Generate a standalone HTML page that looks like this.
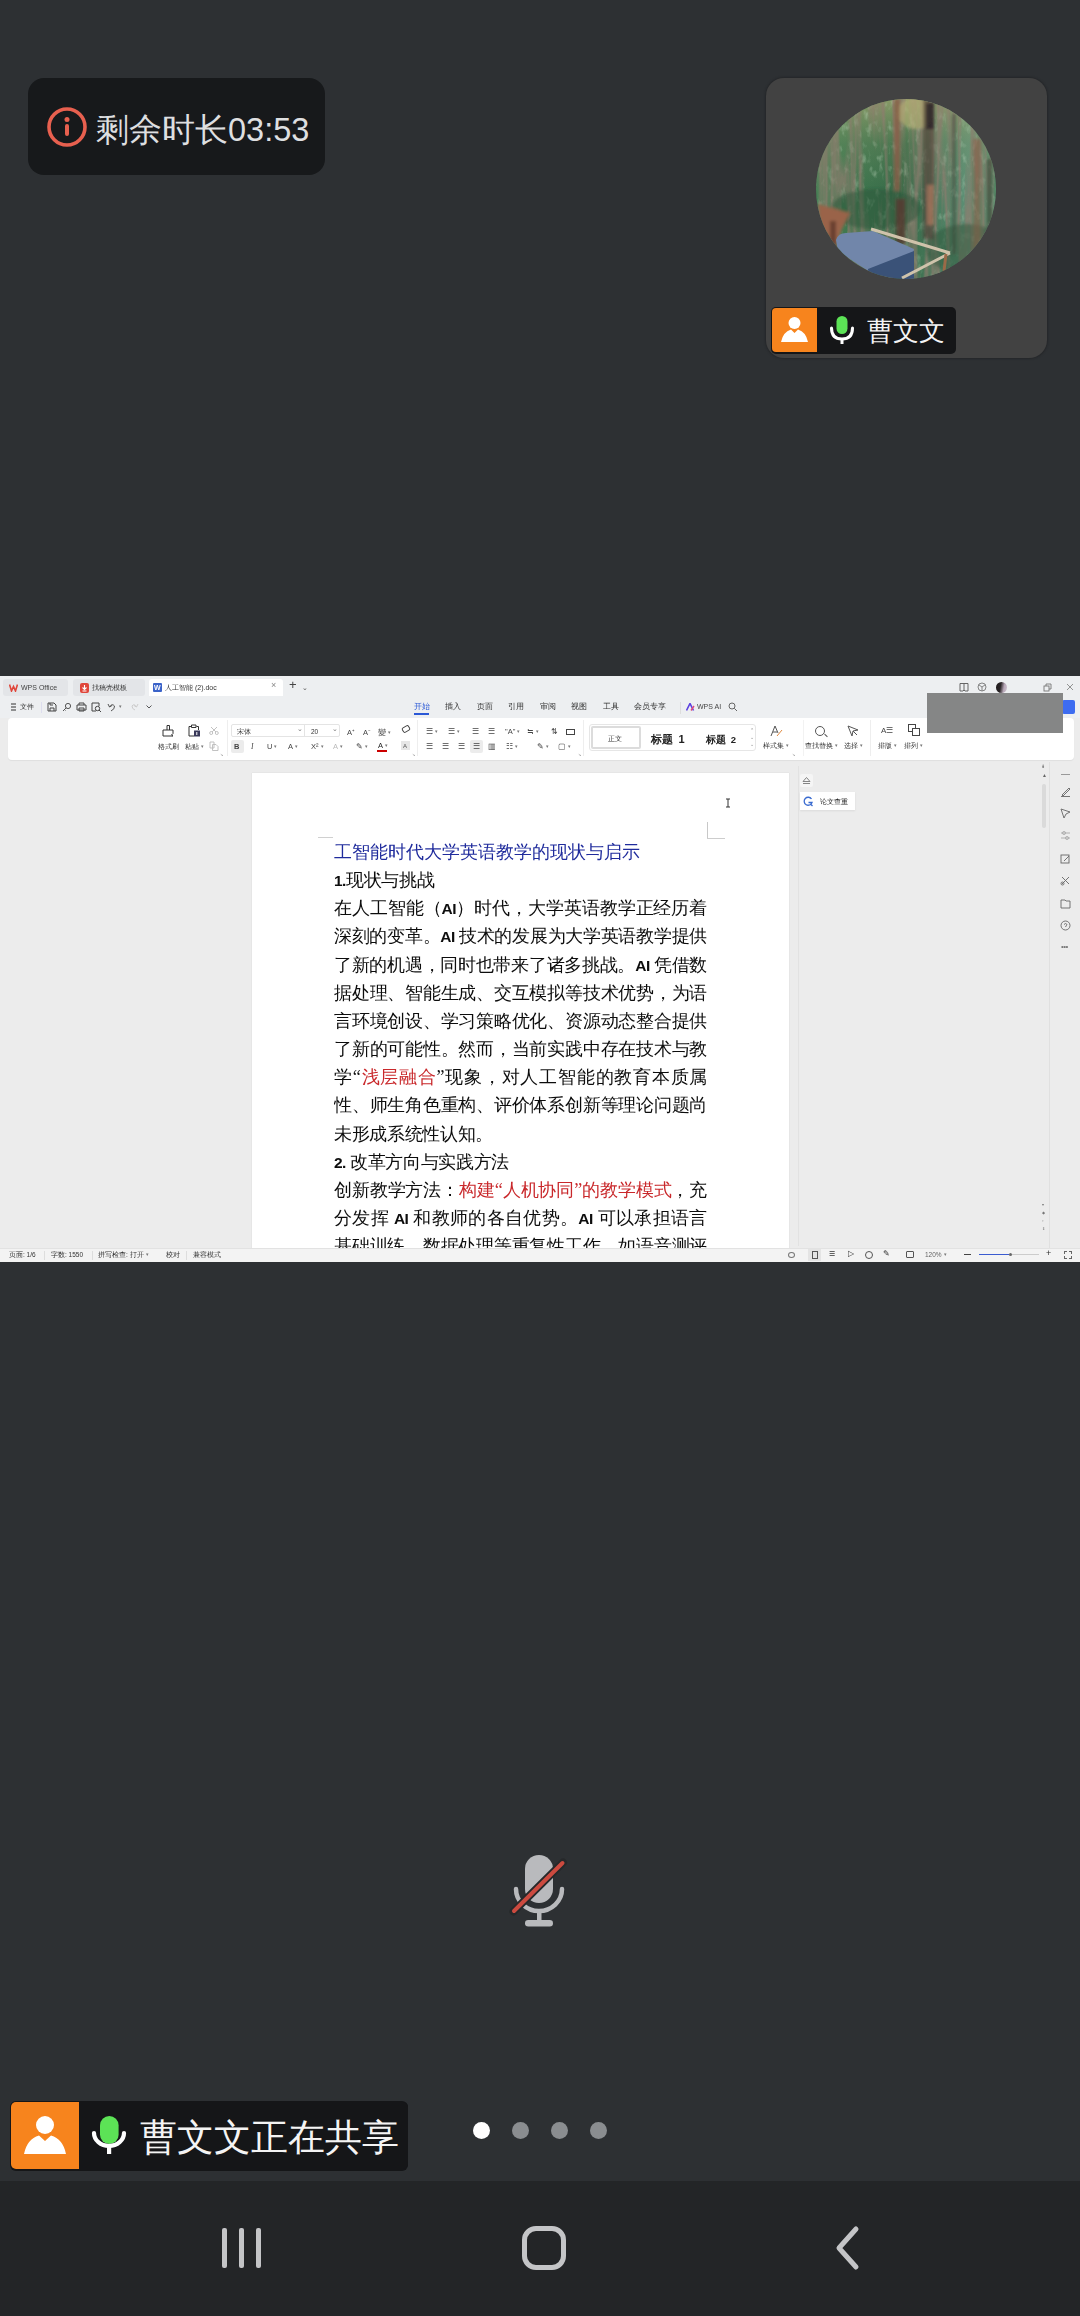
<!DOCTYPE html>
<html><head><meta charset="utf-8">
<style>
*{margin:0;padding:0;box-sizing:border-box}
html,body{width:1080px;height:2316px;overflow:hidden;background:#2d3033;font-family:"Liberation Sans",sans-serif;position:relative}
.abs{position:absolute}
#timer{left:28px;top:78px;width:297px;height:97px;border-radius:16px;background:#17191b}
#timer .txt{left:68px;top:32px;font-size:32.5px;color:#dedfe0;white-space:nowrap;line-height:40px}
#tile{left:766px;top:78px;width:281px;height:280px;border-radius:18px;background:#424242;box-shadow:0 0 2px 1px rgba(20,20,22,0.35)}
#avatar{left:50px;top:21px;width:180px;height:180px;border-radius:50%;overflow:hidden;background:#3f6a45}
.lbl{background:#151618;border-radius:4px}
#screen{left:0;top:676px;width:1080px;height:586px;background:#ececec;overflow:hidden;filter:blur(0.3px)}
#nav{left:0;top:2181px;width:1080px;height:135px;background:#232527}
.st{white-space:nowrap;line-height:1}
.menu{top:27px;font-size:7.5px;color:#333}
.dl{left:334px;width:373px;font-size:18px;letter-spacing:-0.35px;line-height:20px;height:20px;color:#0d0d0d;white-space:nowrap;font-family:"Liberation Serif",serif}
.dl.j{text-align:justify;text-align-last:justify;white-space:normal;overflow:hidden}
.dl .en{font-family:"Liberation Sans",sans-serif;font-weight:bold;font-size:15.5px;letter-spacing:-0.5px}
.red{color:#c9282b}
.rb{font-size:6.5px;color:#333}
.ic{font-size:7.5px;color:#444}
.sb{top:575.5px;font-size:6.5px;color:#333}
.ar{font-size:5px;color:#777;margin-left:2px;vertical-align:1px}
.dot{width:17.5px;height:17.5px;border-radius:50%;background:#8a8d90;top:2121.5px}
</style></head>
<body>
<!-- timer -->
<div id="timer" class="abs">
  <svg class="abs" style="left:19px;top:29px" width="40" height="40" viewBox="0 0 40 40">
    <circle cx="20" cy="20" r="18" fill="none" stroke="#e8604f" stroke-width="3.6"/>
    <circle cx="20" cy="12.5" r="2.5" fill="#e8604f"/>
    <rect x="18" y="17" width="4" height="12" rx="2" fill="#e8604f"/>
  </svg>
  <div class="abs txt">剩余时长03:53</div>
</div>

<!-- participant tile -->
<div id="tile" class="abs">
  <svg class="abs" style="left:50px;top:21px" width="180" height="180" viewBox="0 0 180 180">
    <defs>
      <clipPath id="cc"><circle cx="90" cy="90" r="90"/></clipPath>
      <linearGradient id="fg" x1="0" y1="0" x2="1" y2="0">
        <stop offset="0" stop-color="#458054"/><stop offset="0.5" stop-color="#376a48"/><stop offset="0.85" stop-color="#5e9076"/><stop offset="1" stop-color="#548a66"/>
      </linearGradient>
      <linearGradient id="tg" x1="0" y1="0" x2="0" y2="1">
        <stop offset="0" stop-color="#a4a870" stop-opacity="0.75"/><stop offset="0.25" stop-color="#8a9a6a" stop-opacity="0.25"/><stop offset="0.5" stop-color="#8a9a6a" stop-opacity="0"/>
      </linearGradient>
      <filter id="bl" x="-20%" y="-20%" width="140%" height="140%"><feGaussianBlur stdDeviation="1.5"/></filter>
      <filter id="vs" x="0" y="0" width="100%" height="100%">
        <feTurbulence type="turbulence" baseFrequency="0.09 0.006" numOctaves="2" seed="3"/>
        <feColorMatrix values="0 0 0 0 0.28  0 0 0 0 0.2  0 0 0 0 0.16  0 0 0 -3 1.1"/>
      </filter>
      <filter id="tx" x="0" y="0" width="100%" height="100%">
        <feTurbulence type="fractalNoise" baseFrequency="0.16 0.09" numOctaves="3" seed="11"/>
        <feColorMatrix values="0 0 0 0 0.55  0 0 0 0 0.72  0 0 0 0 0.55  0 0 0 3.2 -1.7"/>
      </filter>
    </defs>
    <g clip-path="url(#cc)">
      <rect width="180" height="180" fill="url(#fg)"/>
      <rect width="180" height="180" fill="url(#tg)"/>
      <rect width="180" height="180" filter="url(#tx)" opacity="0.35"/>
      <rect width="180" height="180" filter="url(#vs)" opacity="0.7"/>
      <g filter="url(#bl)">
        <ellipse cx="100" cy="14" rx="18" ry="16" fill="#c0b878" opacity="0.55"/>
        <ellipse cx="60" cy="110" rx="45" ry="20" fill="#2a5438" opacity="0.5"/>
        <ellipse cx="150" cy="150" rx="40" ry="25" fill="#2a5238" opacity="0.5"/>
        <rect x="78" y="0" width="6" height="92" fill="#8a5c44" opacity="0.75"/>
        <rect x="80" y="100" width="9" height="45" fill="#5a3a30" opacity="0.8"/>
        <rect x="107" y="0" width="11" height="140" fill="#4a3a32" opacity="0.6"/>
        <rect x="110" y="4" width="8" height="26" fill="#2a2024" opacity="0.8"/>
        <rect x="111" y="86" width="7" height="40" fill="#c08062" opacity="0.6"/>
        <rect x="136" y="15" width="4" height="140" fill="#3e4a3a" opacity="0.55"/>
        <rect x="157" y="40" width="8" height="120" fill="#8a5a44" opacity="0.6"/>
        <rect x="171" y="60" width="5" height="90" fill="#3a3a30" opacity="0.6"/>
        <path d="M2 105 L34 114 L26 130 L20 146 L4 130 Z" fill="#9a6448"/>
        <rect x="14" y="122" width="6" height="30" fill="#6a4030"/>
      </g>
      <path d="M20 141 Q22 134 30 134 L57 132 L98 150 L96 162 L52 172 L22 152 Z" fill="#7186aa"/>
      <path d="M52 170 L98 152 L98 180 L52 180 Z" fill="#3a5278"/>
      <path d="M55 130 L134 154 M134 154 L86 179" stroke="#cfc3ab" stroke-width="3" fill="none"/>
      <path d="M130 155 L128 172" stroke="#9a6a48" stroke-width="3"/>
    </g>
  </svg>
  <div class="abs" style="left:4.5px;top:228.5px;width:185px;height:47px;background:#151618;border-radius:5px"></div>
  <div class="abs" style="left:6px;top:230px;width:45px;height:44px;background:#f7841d;border-radius:4px 0 0 4px"></div>
  <div class="abs lbl" style="left:51px;top:230px;width:137px;height:44px;border-radius:0 4px 4px 0"></div>
  <svg class="abs" style="left:6px;top:230px" width="45" height="44" viewBox="0 0 45 44">
    <circle cx="22.5" cy="15" r="6" fill="#fff"/>
    <path d="M9 34 Q11 24 19 21.5 L22.5 25 L26 21.5 Q34 24 36 34 Z" fill="#fff"/>
  </svg>
  <svg class="abs" style="left:62px;top:236px" width="28" height="32" viewBox="0 0 28 32">
    <rect x="8.5" y="2" width="11" height="18" rx="5.5" fill="#5ce356"/>
    <path d="M3.5 14 Q3.5 25 14 25 Q24.5 25 24.5 14" fill="none" stroke="#fff" stroke-width="3" stroke-linecap="round"/>
    <rect x="12.5" y="25" width="3" height="5" fill="#fff"/>
  </svg>
  <div class="abs st" style="left:101px;top:238px;font-size:26px;color:#f4f4f4;line-height:30px">曹文文</div>
</div>

<!-- shared screen -->
<div id="screen" class="abs">
  <!-- tab bar -->
  <div class="abs" style="left:0;top:0;width:1080px;height:42px;background:#edeff1"></div>
  <div class="abs" style="left:3px;top:3px;width:65px;height:17px;background:#e3e5e8;border-radius:3px"></div>
  <div class="abs" style="left:73px;top:3px;width:72px;height:17px;background:#e3e5e8;border-radius:3px"></div>
  <div class="abs" style="left:149px;top:3px;width:134px;height:17px;background:#ffffff;border-radius:3px 3px 0 0"></div>
  <svg class="abs" style="left:9px;top:8px" width="9" height="8" viewBox="0 0 9 8"><path d="M0.5 0.5 L2.5 7 L4.5 2.5 L6.5 7 L8.5 0.5" fill="none" stroke="#e0463a" stroke-width="1.6"/></svg>
  <div class="abs st" style="left:21px;top:7.5px;font-size:7px;color:#444">WPS Office</div>
  <div class="abs" style="left:80px;top:7px;width:9px;height:10px;background:#e0463a;border-radius:2px"></div><svg class="abs" style="left:81px;top:8px" width="7" height="8" viewBox="0 0 7 8" fill="none" stroke="#fff" stroke-width="1.1"><path d="M3.5 1 V5 M1.5 3.5 L3.5 5.5 L5.5 3.5 M1.5 7 H5.5"/></svg>
  <div class="abs st" style="left:92px;top:7.5px;font-size:7px;color:#333">找稿壳模板</div>
  <div class="abs" style="left:153px;top:7px;width:9px;height:9px;background:#3b63c9;border-radius:1px"></div>
  <div class="abs st" style="left:154px;top:7.5px;font-size:7px;color:#fff;font-weight:bold">W</div>
  <div class="abs st" style="left:165px;top:7.5px;font-size:7px;color:#333">人工智能 (2).doc</div>
  <div class="abs st" style="left:271px;top:5px;font-size:9px;color:#888">×</div>
  <div class="abs st" style="left:289px;top:2px;font-size:13px;color:#444">+</div>
  <div class="abs st" style="left:302px;top:7.5px;font-size:7px;color:#555">⌄</div>
  <!-- window icons -->
  <svg class="abs" style="left:959px;top:6px" width="10" height="10" viewBox="0 0 10 10" fill="none" stroke="#666" stroke-width="1"><path d="M1 1.5 H9 V9 H6 L5 8 L4 9 H1 Z M5 1.5 V8"/></svg>
  <svg class="abs" style="left:977px;top:6px" width="10" height="10" viewBox="0 0 10 10" fill="none" stroke="#777" stroke-width="0.9"><circle cx="5" cy="5" r="4"/><path d="M5 5 V9 M5 5 L1.8 2.8 M5 5 L8.2 2.8"/></svg>
  <div class="abs" style="left:996px;top:6px;width:11px;height:11px;background:linear-gradient(100deg,#1e1a1c 0%,#2a2426 40%,#b8a8b8 70%,#d0c4d0 100%);border-radius:50%"></div>
  <svg class="abs" style="left:1043px;top:7px" width="9" height="9" viewBox="0 0 9 9" fill="none" stroke="#777" stroke-width="0.9"><rect x="1" y="3" width="5" height="5"/><path d="M3 3 V1 H8 V6 H6"/></svg>
  <svg class="abs" style="left:1066px;top:7px" width="8" height="8" viewBox="0 0 8 8" fill="none" stroke="#888" stroke-width="0.9"><path d="M1 1 L7 7 M7 1 L1 7"/></svg>
  <!-- menu row -->
  <svg class="abs" style="left:10px;top:27px" width="7" height="8" viewBox="0 0 7 8" fill="none" stroke="#333" stroke-width="1"><path d="M1 1 H6 M1 4 H6 M1 7 H6"/></svg>
  <div class="abs st" style="left:20px;top:27px;font-size:7px;color:#333">文件</div>
  <div class="abs" style="left:41px;top:26px;width:1px;height:11px;background:#dde"></div>
  <svg class="abs" style="left:47px;top:26px" width="10" height="10" viewBox="0 0 10 10" fill="none" stroke="#444" stroke-width="1"><path d="M1 1 H7 L9 3 V9 H1 Z M3 9 V6 H7 V9 M3 1 V3 H6"/></svg>
  <svg class="abs" style="left:62px;top:26px" width="10" height="10" viewBox="0 0 10 10" fill="none" stroke="#555" stroke-width="1"><circle cx="6" cy="4" r="2.6"/><path d="M4.2 5.8 L1 9 M2.5 7.5 L3.5 8.5"/></svg>
  <svg class="abs" style="left:76px;top:26px" width="11" height="10" viewBox="0 0 11 10" fill="none" stroke="#444" stroke-width="1"><path d="M3 3 V1 H8 V3 M1 3 H10 V8 H1 Z M3 6 H8 V9 H3 Z"/></svg>
  <svg class="abs" style="left:91px;top:26px" width="11" height="11" viewBox="0 0 11 11" fill="none" stroke="#444" stroke-width="1"><path d="M5 9 H1 V1 H8 V4"/><circle cx="6.5" cy="6.5" r="2.2"/><path d="M8 8 L10 10"/></svg>
  <svg class="abs" style="left:107px;top:26px" width="9" height="10" viewBox="0 0 9 10" fill="none" stroke="#555" stroke-width="1"><path d="M1 2 L2.5 5 L5 3.5 M2.5 5 Q5 1 7.5 4 Q8 7 4 9"/></svg>
  <div class="abs st" style="left:119px;top:28px;font-size:5px;color:#777">▾</div>
  <svg class="abs" style="left:131px;top:26px" width="8" height="9" viewBox="0 0 8 9" fill="none" stroke="#ccc" stroke-width="1"><path d="M7 2 L5.5 5 L3 3.5 M5.5 5 Q3 1 1 4 Q1 7 4 8"/></svg>
  <svg class="abs" style="left:146px;top:29px" width="6" height="4" viewBox="0 0 6 4" fill="none" stroke="#555" stroke-width="1"><path d="M0.5 0.5 L3 3 L5.5 0.5"/></svg>
  <div class="abs st menu" style="left:414px;color:#2a58d6">开始</div>
  <div class="abs" style="left:414px;top:37px;width:15px;height:1.5px;background:#2a58d6"></div>
  <div class="abs st menu" style="left:445px">插入</div>
  <div class="abs st menu" style="left:477px">页面</div>
  <div class="abs st menu" style="left:508px">引用</div>
  <div class="abs st menu" style="left:540px">审阅</div>
  <div class="abs st menu" style="left:571px">视图</div>
  <div class="abs st menu" style="left:603px">工具</div>
  <div class="abs st menu" style="left:634px">会员专享</div>
  <div class="abs" style="left:680px;top:26px;width:1px;height:12px;background:#ddd"></div>
  <svg class="abs" style="left:686px;top:27px" width="10" height="8" viewBox="0 0 10 8"><path d="M0.5 7.5 L4 0.5 L7.5 7.5" fill="none" stroke="#5a3fe0" stroke-width="1.6"/><path d="M5 7.5 L8 3" stroke="#e04a7a" stroke-width="1.4"/></svg>
  <div class="abs st" style="left:697px;top:27px;font-size:7px;color:#444">WPS AI</div>
  <svg class="abs" style="left:728px;top:26px" width="10" height="10" viewBox="0 0 10 10" fill="none" stroke="#666" stroke-width="1"><circle cx="4" cy="4" r="3"/><path d="M6.3 6.3 L9 9"/></svg>
  <div class="abs" style="left:1062px;top:24px;width:13px;height:14px;background:#3d6cf0;border-radius:2px"></div>
  <!-- ribbon card -->
  <div class="abs" style="left:8px;top:42px;width:1066px;height:42px;background:#fff;border-radius:4px;box-shadow:0 1px 1px rgba(0,0,0,0.06)"></div>
<!-- ribbon contents -->
  <svg class="abs" style="left:161px;top:48px" width="14" height="13" viewBox="0 0 14 13" fill="none" stroke="#333" stroke-width="1"><path d="M6 6 V1.5 H8.5 V6 M2 12 V6 H12 V9.5 L10.5 11 L12 12 Z"/></svg>
  <div class="abs st rb" style="left:158px;top:68px">格式刷</div>
  <svg class="abs" style="left:187px;top:48px" width="14" height="13" viewBox="0 0 14 13" fill="none" stroke="#333" stroke-width="1"><path d="M4 2.5 H2 V12 H7 M9.5 2.5 H11.5 V6 M4.5 1 H9 V3.5 H4.5 Z"/><rect x="7" y="6.5" width="6" height="6" fill="#3a3a5a" stroke="none"/><path d="M9.8 8 V11" stroke="#fff"/></svg>
  <div class="abs st rb" style="left:185px;top:68px">粘贴<span class="ar">▾</span></div>
  <svg class="abs" style="left:209px;top:50px" width="10" height="9" viewBox="0 0 10 9" fill="none" stroke="#bbb" stroke-width="0.9"><path d="M2 1 L7 6 M8 1 L3 6"/><circle cx="2.2" cy="7" r="1.5"/><circle cx="7.8" cy="7" r="1.5"/></svg>
  <svg class="abs" style="left:209px;top:65px" width="10" height="10" viewBox="0 0 10 10" fill="none" stroke="#bbb" stroke-width="0.9"><path d="M1 1 H5 V7 H1 Z M3.5 3.5 H7 L9 5.5 V9.5 H3.5 Z"/></svg>
  <div class="abs" style="left:227px;top:44px;width:1px;height:36px;background:#eee"></div>
  <div class="abs" style="left:231px;top:48px;width:109px;height:13px;border:1px solid #e4e4e4;border-radius:2px"></div>
  <div class="abs" style="left:304px;top:48px;width:1px;height:13px;background:#e4e4e4"></div>
  <div class="abs st rb" style="left:237px;top:52.5px">宋体</div>
  <div class="abs st rb" style="left:297px;top:50px;color:#777">⌄</div>
  <div class="abs st rb" style="left:311px;top:52.5px">20</div>
  <div class="abs st rb" style="left:332px;top:50px;color:#777">⌄</div>
  <div class="abs" style="left:231px;top:64px;width:13px;height:13px;background:#ececec;border-radius:2px"></div>
  <div class="abs st ic" style="left:234px;top:67px;font-weight:bold">B</div>
  <div class="abs st ic" style="left:251px;top:67px;font-style:italic;font-family:'Liberation Serif',serif">I</div>
  <div class="abs st ic" style="left:267px;top:67px">U<span class="ar">▾</span></div>
  <div class="abs st ic" style="left:288px;top:67px">A<span class="ar">▾</span></div>
  <div class="abs st ic" style="left:311px;top:67px">X²<span class="ar">▾</span></div>
  <div class="abs st ic" style="left:333px;top:67px;color:#bbb">A<span class="ar">▾</span></div>
  <div class="abs st ic" style="left:356px;top:67px">&#9998;<span class="ar">▾</span></div>
  <div class="abs st ic" style="left:378px;top:66px;color:#222">A<span class="ar">▾</span></div>
  <div class="abs" style="left:377px;top:74px;width:10px;height:2px;background:#c00"></div>
  <div class="abs" style="left:401px;top:65px;width:9px;height:9px;background:#e6e6e6"></div>
  <div class="abs st" style="left:403px;top:67px;font-size:6px;color:#555">A</div>
  <div class="abs st ic" style="left:347px;top:52.5px">A⁺</div>
  <div class="abs st ic" style="left:363px;top:52.5px">A⁻</div>
  <div class="abs st ic" style="left:378px;top:52.5px">變<span class="ar">▾</span></div>
  <div class="abs" style="left:402px;top:50px;width:8px;height:6px;border:1px solid #444;border-radius:2px;transform:rotate(-30deg)"></div>
  <div class="abs" style="left:417px;top:44px;width:1px;height:36px;background:#eee"></div>
  <div class="abs st ic" style="left:426px;top:51.5px">☰<span class="ar">▾</span></div>
  <div class="abs st ic" style="left:448px;top:51.5px">☰<span class="ar">▾</span></div>
  <div class="abs st ic" style="left:472px;top:51.5px">☰</div>
  <div class="abs st ic" style="left:488px;top:51.5px">☰</div>
  <div class="abs st ic" style="left:505px;top:51.5px">"A"<span class="ar">▾</span></div>
  <div class="abs st ic" style="left:527px;top:51.5px">≒<span class="ar">▾</span></div>
  <div class="abs st ic" style="left:551px;top:51.5px">⇅</div>
  <div class="abs" style="left:566px;top:53px;width:9px;height:6px;border:1px solid #444"></div>
  <div class="abs st ic" style="left:426px;top:67px">☰</div>
  <div class="abs st ic" style="left:442px;top:67px">☰</div>
  <div class="abs st ic" style="left:458px;top:67px">☰</div>
  <div class="abs" style="left:470px;top:64px;width:13px;height:13px;background:#ececec;border-radius:2px"></div>
  <div class="abs st ic" style="left:473px;top:67px">☰</div>
  <div class="abs st ic" style="left:488px;top:67px">▥</div>
  <div class="abs st ic" style="left:506px;top:67px">☷<span class="ar">▾</span></div>
  <div class="abs st ic" style="left:537px;top:67px">&#9998;<span class="ar">▾</span></div>
  <div class="abs st ic" style="left:558px;top:67px">▢<span class="ar">▾</span></div>
  <div class="abs" style="left:583px;top:44px;width:1px;height:36px;background:#eee"></div>
  <div class="abs" style="left:589px;top:48px;width:167px;height:27px;border:1px solid #e6e6e6;border-radius:3px"></div>
  <div class="abs" style="left:591px;top:50px;width:50px;height:23px;border:2px solid #dcdcdc;border-radius:2px"></div>
  <div class="abs st" style="left:608px;top:59px;font-size:7px;color:#333">正文</div>
  <div class="abs st" style="left:651px;top:57.5px;font-size:11px;color:#222;font-weight:bold;font-family:'Liberation Serif',serif">标题&nbsp;&nbsp;<span style="font-family:'Liberation Sans',sans-serif">1</span></div>
  <div class="abs st" style="left:706px;top:58.5px;font-size:9.5px;color:#222;font-weight:bold;font-family:'Liberation Serif',serif">标题&nbsp;&nbsp;<span style="font-family:'Liberation Sans',sans-serif">2</span></div>
  <div class="abs st" style="left:750px;top:51px;font-size:5px;color:#888;line-height:7px">⌃<br>⌄<br>⌄</div>
  <svg class="abs" style="left:769px;top:48px" width="14" height="14" viewBox="0 0 14 14" fill="none" stroke="#555" stroke-width="1"><path d="M2 12 L6 2 L9 9 M4 8 H8"/><path d="M8 12 L13 6" stroke="#e08a40"/></svg>
  <div class="abs st rb" style="left:763px;top:67px">样式集<span class="ar">▾</span></div>
  <div class="abs" style="left:803px;top:44px;width:1px;height:36px;background:#f2f2f2"></div>
  <div class="abs" style="left:815px;top:50px;width:10px;height:10px;border:1px solid #555;border-radius:50%"></div>
  <div class="abs" style="left:824px;top:59px;width:4px;height:1px;background:#555;transform:rotate(45deg)"></div>
  <div class="abs st rb" style="left:805px;top:67px">查找替换<span class="ar">▾</span></div>
  <svg class="abs" style="left:847px;top:49px" width="12" height="12" viewBox="0 0 12 12" fill="none" stroke="#555" stroke-width="1"><path d="M1 1 L11 5 L6 6 L5 11 Z M6 6 L10 10"/></svg>
  <div class="abs st rb" style="left:844px;top:67px">选择<span class="ar">▾</span></div>
  <div class="abs" style="left:870px;top:44px;width:1px;height:36px;background:#eee"></div>
  <div class="abs st" style="left:881px;top:51px;font-size:8px;color:#444">A☰</div>
  <div class="abs st rb" style="left:878px;top:67px">排版<span class="ar">▾</span></div>
  <div class="abs" style="left:908px;top:48px;width:8px;height:8px;border:1px solid #444"></div>
  <div class="abs" style="left:912px;top:52px;width:8px;height:8px;border:1px solid #444;background:#fff"></div>
  <div class="abs st rb" style="left:904px;top:67px">排列<span class="ar">▾</span></div>
  <div class="abs st" style="left:220px;top:77px;font-size:4px;color:#999">↘</div>
  <div class="abs st" style="left:412px;top:77px;font-size:4px;color:#999">↘</div>
  <div class="abs st" style="left:578px;top:77px;font-size:4px;color:#999">↘</div>
  <div class="abs st" style="left:792px;top:77px;font-size:4px;color:#999">↘</div>
  <!-- gray overlay box -->
  <div class="abs" style="left:927px;top:17px;width:136px;height:40px;background:#858686"></div>
  <!-- document area -->
  <div class="abs" style="left:252px;top:97px;width:537px;height:480px;background:#fff;box-shadow:0 0 1px rgba(0,0,0,0.15)"></div>
<div class="abs" style="left:0;top:0;width:1080px;height:572px;overflow:hidden">
<div class="abs dl" style="top:166.0px"><span style="color:#1f2b9c;letter-spacing:0">工智能时代大学英语教学的现状与启示</span></div>
<div class="abs dl" style="top:194.2px"><b class="en">1.</b>现状与挑战</div>
<div class="abs dl j" style="top:222.3px">在人工智能（<b class="en">AI</b>）时代，大学英语教学正经历着</div>
<div class="abs dl j" style="top:250.4px">深刻的变革。<b class="en">AI</b> 技术的发展为大学英语教学提供</div>
<div class="abs dl j" style="top:278.6px">了新的机遇，同时也带来了诸多挑战。<b class="en">AI</b> 凭借数</div>
<div class="abs dl j" style="top:306.8px">据处理、智能生成、交互模拟等技术优势，为语</div>
<div class="abs dl j" style="top:334.9px">言环境创设、学习策略优化、资源动态整合提供</div>
<div class="abs dl j" style="top:363.0px">了新的可能性。然而，当前实践中存在技术与教</div>
<div class="abs dl j" style="top:391.2px">学“<span class="red">浅层融合</span>”现象，对人工智能的教育本质属</div>
<div class="abs dl j" style="top:419.4px">性、师生角色重构、评价体系创新等理论问题尚</div>
<div class="abs dl" style="top:447.5px">未形成系统性认知。</div>
<div class="abs dl" style="top:475.6px"><b class="en">2.</b> 改革方向与实践方法</div>
<div class="abs dl j" style="top:503.8px">创新教学方法：<span class="red">构建“人机协同”的教学模式</span>，充</div>
<div class="abs dl j" style="top:532.0px">分发挥 <b class="en">AI</b> 和教师的各自优势。<b class="en">AI</b> 可以承担语言</div>
<div class="abs dl j" style="top:560.1px">基础训练、数据处理等重复性工作，如语音测评</div>
</div>
<div class="abs" style="left:318px;top:161px;width:15px;height:1px;background:#d0d0d0"></div>
<div class="abs" style="left:707px;top:146px;width:1px;height:16px;background:#c8c8c8"></div>
<div class="abs" style="left:707px;top:162px;width:18px;height:1px;background:#cdcdcd"></div>
<svg class="abs" style="left:725px;top:122px" width="6" height="10" viewBox="0 0 6 10" fill="none" stroke="#333" stroke-width="1"><path d="M1 1 H5 M3 1 V9 M1 9 H5"/></svg>
  <!-- right panel -->
  <div class="abs" style="left:798px;top:90px;width:1px;height:480px;background:#e2e2e2"></div>
  <div class="abs" style="left:800px;top:98px;width:13px;height:13px;background:#f5f5f5;border-radius:2px"></div>
  <svg class="abs" style="left:802px;top:100px" width="9" height="9" viewBox="0 0 9 9" fill="none" stroke="#777" stroke-width="0.9"><path d="M1 5.5 L4.5 1.5 L8 5.5 Z M1 7.5 H8"/></svg>
  <div class="abs" style="left:800px;top:116px;width:55px;height:18px;background:#fff;box-shadow:0 1px 2px rgba(0,0,0,0.08)"></div>
  <svg class="abs" style="left:803px;top:120px" width="11" height="11" viewBox="0 0 11 11" fill="none" stroke="#3a6bd0" stroke-width="1.3"><path d="M8.5 3 A4 4 0 1 0 9 6.5 H5.5 M7.5 8 L9.5 10"/></svg>
  <div class="abs st" style="left:820px;top:121.5px;font-size:7px;color:#222">论文查重</div>
  <!-- scrollbar -->
  <div class="abs" style="left:1049px;top:86px;width:1px;height:492px;background:#e0e0e0"></div>
  <div class="abs" style="left:1042px;top:108px;width:4px;height:44px;background:#dadada;border-radius:2px"></div>
  <div class="abs st" style="left:1041px;top:88px;font-size:5px;color:#666">⇟</div>
  <div class="abs st" style="left:1042px;top:97px;font-size:5px;color:#666">▲</div>
<!-- right tool sidebar -->
  <div class="abs" style="left:1061px;top:98px;width:9px;height:1px;background:#999"></div>
  <svg class="abs" style="left:1060px;top:110px" width="11" height="11" viewBox="0 0 11 11" fill="none" stroke="#666" stroke-width="0.9"><path d="M2 9 L9 2 L10 3 L3 10 Z M1 10.5 H10"/></svg>
  <svg class="abs" style="left:1060px;top:132px" width="11" height="11" viewBox="0 0 11 11" fill="none" stroke="#666" stroke-width="0.9"><path d="M1 1 L10 4 L6 6 L4 10 Z"/></svg>
  <svg class="abs" style="left:1060px;top:154px" width="11" height="11" viewBox="0 0 11 11" fill="none" stroke="#aaa" stroke-width="0.9"><path d="M1 3 H10 M1 8 H10"/><circle cx="4" cy="3" r="1.5"/><circle cx="7" cy="8" r="1.5"/></svg>
  <svg class="abs" style="left:1060px;top:177px" width="11" height="11" viewBox="0 0 11 11" fill="none" stroke="#666" stroke-width="0.9"><rect x="1" y="2" width="8" height="8"/><path d="M4 8 L9 3"/></svg>
  <svg class="abs" style="left:1060px;top:199px" width="11" height="11" viewBox="0 0 11 11" fill="none" stroke="#666" stroke-width="0.9"><path d="M2 2 L9 9 M9 2 L2 9"/><circle cx="2.5" cy="8.5" r="1.5"/></svg>
  <svg class="abs" style="left:1060px;top:222px" width="11" height="11" viewBox="0 0 11 11" fill="none" stroke="#666" stroke-width="0.9"><path d="M1 2 H5 L6 3 H10 V10 H1 Z"/></svg>
  <svg class="abs" style="left:1060px;top:244px" width="11" height="11" viewBox="0 0 11 11" fill="none" stroke="#666" stroke-width="0.9"><circle cx="5.5" cy="5.5" r="4.5"/><path d="M4 4.5 Q5.5 2.5 7 4.5 Q6 6 5.5 7"/></svg>
  <div class="abs st" style="left:1061px;top:267px;font-size:8px;color:#777;letter-spacing:-0.5px">•••</div>
  <div class="abs st" style="left:1042px;top:525px;font-size:4px;color:#777;line-height:8px">▾<br>◆<br>▫<br>⇟</div>
  <!-- status bar -->
  <div class="abs" style="left:0;top:572px;width:1080px;height:14px;background:#f3f3f3;border-top:1px solid #e2e2e2"></div>
<!-- status contents -->
  <div class="abs st sb" style="left:9px">页面: 1/6</div>
  <div class="abs" style="left:44px;top:575px;width:1px;height:9px;background:#ddd"></div>
  <div class="abs st sb" style="left:51px">字数: 1550</div>
  <div class="abs" style="left:92px;top:575px;width:1px;height:9px;background:#ddd"></div>
  <div class="abs st sb" style="left:98px">拼写检查: 打开<span class="ar">▾</span></div>
  <div class="abs st sb" style="left:166px">校对</div>
  <div class="abs" style="left:186px;top:575px;width:1px;height:9px;background:#ddd"></div>
  <div class="abs st sb" style="left:193px">兼容模式</div>
  <div class="abs" style="left:788px;top:576px;width:7px;height:6px;border:1px solid #777;border-radius:50%"></div>
  <div class="abs" style="left:808px;top:573px;width:13px;height:12px;background:#e4e4e4"></div>
  <div class="abs" style="left:812px;top:575px;width:6px;height:8px;border:1px solid #555"></div>
  <div class="abs st sb" style="left:829px;top:575px">☰</div>
  <div class="abs st sb" style="left:848px;top:574px;font-size:8px">▷</div>
  <div class="abs" style="left:865px;top:575px;width:8px;height:8px;border:1px solid #555;border-radius:50%"></div>
  <div class="abs st sb" style="left:883px;top:574px;font-size:8px">&#9998;</div>
  <div class="abs" style="left:906px;top:575px;width:8px;height:7px;border:1px solid #555;border-radius:1px"></div>
  <div class="abs st sb" style="left:925px;color:#666">120%<span class="ar">▾</span></div>
  <div class="abs" style="left:964px;top:578px;width:7px;height:1px;background:#444"></div>
  <div class="abs" style="left:979px;top:578px;width:30px;height:1px;background:#3a5bd0"></div>
  <div class="abs" style="left:1009px;top:577px;width:3px;height:3px;background:#666;border-radius:50%"></div>
  <div class="abs" style="left:1012px;top:578px;width:27px;height:1px;background:#ccc"></div>
  <div class="abs st sb" style="left:1046px;top:573px;font-size:9px;color:#333">+</div>
  <div class="abs" style="left:1064px;top:575px;width:8px;height:8px;border:1px dashed #666"></div>
</div>

<!-- muted mic -->
<svg class="abs" style="left:498px;top:1850px" width="80" height="80" viewBox="0 0 80 80">
  <rect x="27" y="5" width="28" height="48" rx="14" fill="#b9babd"/>
  <path d="M18 39 A23 22 0 0 0 64 39" fill="none" stroke="#b9babd" stroke-width="4.5" stroke-linecap="round"/>
  <rect x="39" y="60" width="4.5" height="12" fill="#b9babd"/>
  <rect x="27" y="70" width="28" height="6.5" rx="3.2" fill="#b9babd"/>
  <path d="M15.5 61.5 L65 12.5" stroke="#26282a" stroke-width="8" stroke-linecap="round"/>
  <path d="M16 61 L64.5 13" stroke="#cc4a3f" stroke-width="4" stroke-linecap="round"/>
</svg>

<!-- bottom sharing label -->
<div class="abs" style="left:9.5px;top:2100.5px;width:398.5px;height:70px;background:#151618;border-radius:6px"></div>
<div class="abs" style="left:11px;top:2102px;width:68px;height:67px;background:#f7841d;border-radius:5px 0 0 5px"></div>
<div class="abs lbl" style="left:79px;top:2102px;width:329px;height:67px;border-radius:0 5px 5px 0"></div>

<svg class="abs" style="left:11px;top:2102px" width="68" height="67" viewBox="0 0 68 67">
  <circle cx="34" cy="23" r="9" fill="#fff"/>
  <path d="M13 52 Q16 37 28 33.5 L34 39 L40 33.5 Q52 37 55 52 Z" fill="#fff"/>
</svg>
<svg class="abs" style="left:88px;top:2114px" width="42" height="44" viewBox="0 0 42 44">
  <rect x="12" y="2" width="18.6" height="28" rx="9.3" fill="#5ce356"/>
  <path d="M6 19 A15 13 0 0 0 36 19" fill="none" stroke="#fff" stroke-width="4.2" stroke-linecap="round"/>
  <rect x="19" y="31" width="4.2" height="9" fill="#fff"/>
</svg>
<div class="abs st" style="left:140px;top:2116px;font-size:36.5px;color:#f4f4f4;line-height:44px">曹文文正在共享</div>
<div class="abs dot" style="left:472.8px;background:#fff"></div>
<div class="abs dot" style="left:511.7px"></div>
<div class="abs dot" style="left:550.8px"></div>
<div class="abs dot" style="left:589.7px"></div>

<div id="nav" class="abs">
  <div class="abs" style="left:222px;top:47px;width:5px;height:40px;background:#c4c5c7;border-radius:2px"></div>
  <div class="abs" style="left:239px;top:47px;width:5px;height:40px;background:#c4c5c7;border-radius:2px"></div>
  <div class="abs" style="left:256px;top:47px;width:5px;height:40px;background:#c4c5c7;border-radius:2px"></div>
  <div class="abs" style="left:522px;top:45px;width:44px;height:44px;border:5px solid #c4c5c7;border-radius:14px"></div>
  <svg class="abs" style="left:830px;top:44px" width="34" height="46" viewBox="0 0 34 46"><path d="M26 4 L9 23 L26 42" fill="none" stroke="#c4c5c7" stroke-width="5" stroke-linecap="round" stroke-linejoin="round"/></svg>
</div>
</body></html>
